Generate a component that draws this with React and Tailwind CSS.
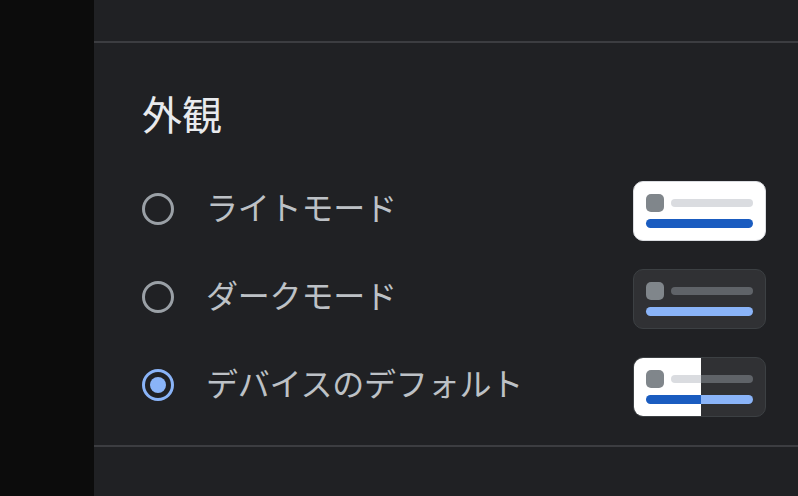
import React from 'react'

const font = { fontFamily: '"Noto Sans CJK JP", "Noto Sans", sans-serif' }

function Radio({ checked }) {
  if (checked) {
    return (
      <div className="w-8 h-8 rounded-full border-[3.5px] border-[#8ab4f8] flex items-center justify-center shrink-0">
        <div className="w-4 h-4 rounded-full bg-[#8ab4f8]" />
      </div>
    )
  }
  return <div className="w-8 h-8 rounded-full border-[3.5px] border-[#9aa0a6] shrink-0" />
}

function Thumb({ mode }) {
  if (mode === 'light') {
    return (
      <div className="mt-[4px] w-[133px] h-[60px] rounded-[10px] bg-white border border-[#dadce0] px-[12px] pt-[12px]">
        <div className="flex items-center gap-[7px]">
          <div className="w-[18px] h-[18px] rounded-[5px] bg-[#80868b]" />
          <div className="flex-1 h-[8px] rounded-full bg-[#dadce0]" />
        </div>
        <div className="mt-[7px] h-[9px] rounded-full bg-[#1a5cc0]" />
      </div>
    )
  }
  if (mode === 'dark') {
    return (
      <div className="mt-[4px] w-[133px] h-[60px] rounded-[10px] bg-[#303134] border border-[#3c4043] px-[12px] pt-[12px]">
        <div className="flex items-center gap-[7px]">
          <div className="w-[18px] h-[18px] rounded-[5px] bg-[#80868b]" />
          <div className="flex-1 h-[8px] rounded-full bg-[#5f6368]" />
        </div>
        <div className="mt-[7px] h-[9px] rounded-full bg-[#8ab4f8]" />
      </div>
    )
  }
  return (
    <div className="mt-[4px] w-[133px] h-[60px] rounded-[10px] overflow-hidden border border-[#3c4043] relative bg-[#303134]">
      <div className="absolute left-0 top-0 bottom-0 w-[67px] bg-white" />
      <div className="relative px-[12px] pt-[12px]">
        <div className="flex items-center gap-[7px]">
          <div className="w-[18px] h-[18px] rounded-[5px] bg-[#80868b]" />
          <div className="flex-1 h-[8px] rounded-full flex overflow-hidden">
            <div className="w-[30px] bg-[#dadce0]" />
            <div className="flex-1 bg-[#5f6368]" />
          </div>
        </div>
        <div className="mt-[7px] h-[9px] rounded-full flex overflow-hidden">
          <div className="w-[55px] bg-[#1a5cc0]" />
          <div className="flex-1 bg-[#8ab4f8]" />
        </div>
      </div>
    </div>
  )
}

const options = [
  { label: 'ライトモード', mode: 'light', checked: false },
  { label: 'ダークモード', mode: 'dark', checked: false },
  { label: 'デバイスのデフォルト', mode: 'system', checked: true },
]

export default function App() {
  return (
    <div className="w-[798px] h-[496px] flex bg-[#202124] overflow-hidden" style={font}>
      <div className="w-[94px] shrink-0 bg-[#0c0c0c]" />
      <div className="flex-1 flex flex-col">
        <div className="h-[41px] shrink-0" />
        <div className="h-[2px] bg-[#3c3d41]" />
        <div className="pl-[48px] pr-[32px] pt-[46px] pb-[16px]">
          <h2 className="text-[40px] leading-[48px] text-[#e8eaed] font-normal">外観</h2>
          <div className="mt-[28px] flex flex-col">
            {options.map((o) => (
              <div key={o.mode} className="h-[88px] flex items-center">
                <Radio checked={o.checked} />
                <span className="ml-[32px] pb-[6px] flex-1 text-[32px] leading-[40px] tracking-[-0.2px] text-[#bdc1c6]">{o.label}</span>
                <Thumb mode={o.mode} />
              </div>
            ))}
          </div>
        </div>
        <div className="h-[2px] bg-[#3c3d41]" />
      </div>
    </div>
  )
}
